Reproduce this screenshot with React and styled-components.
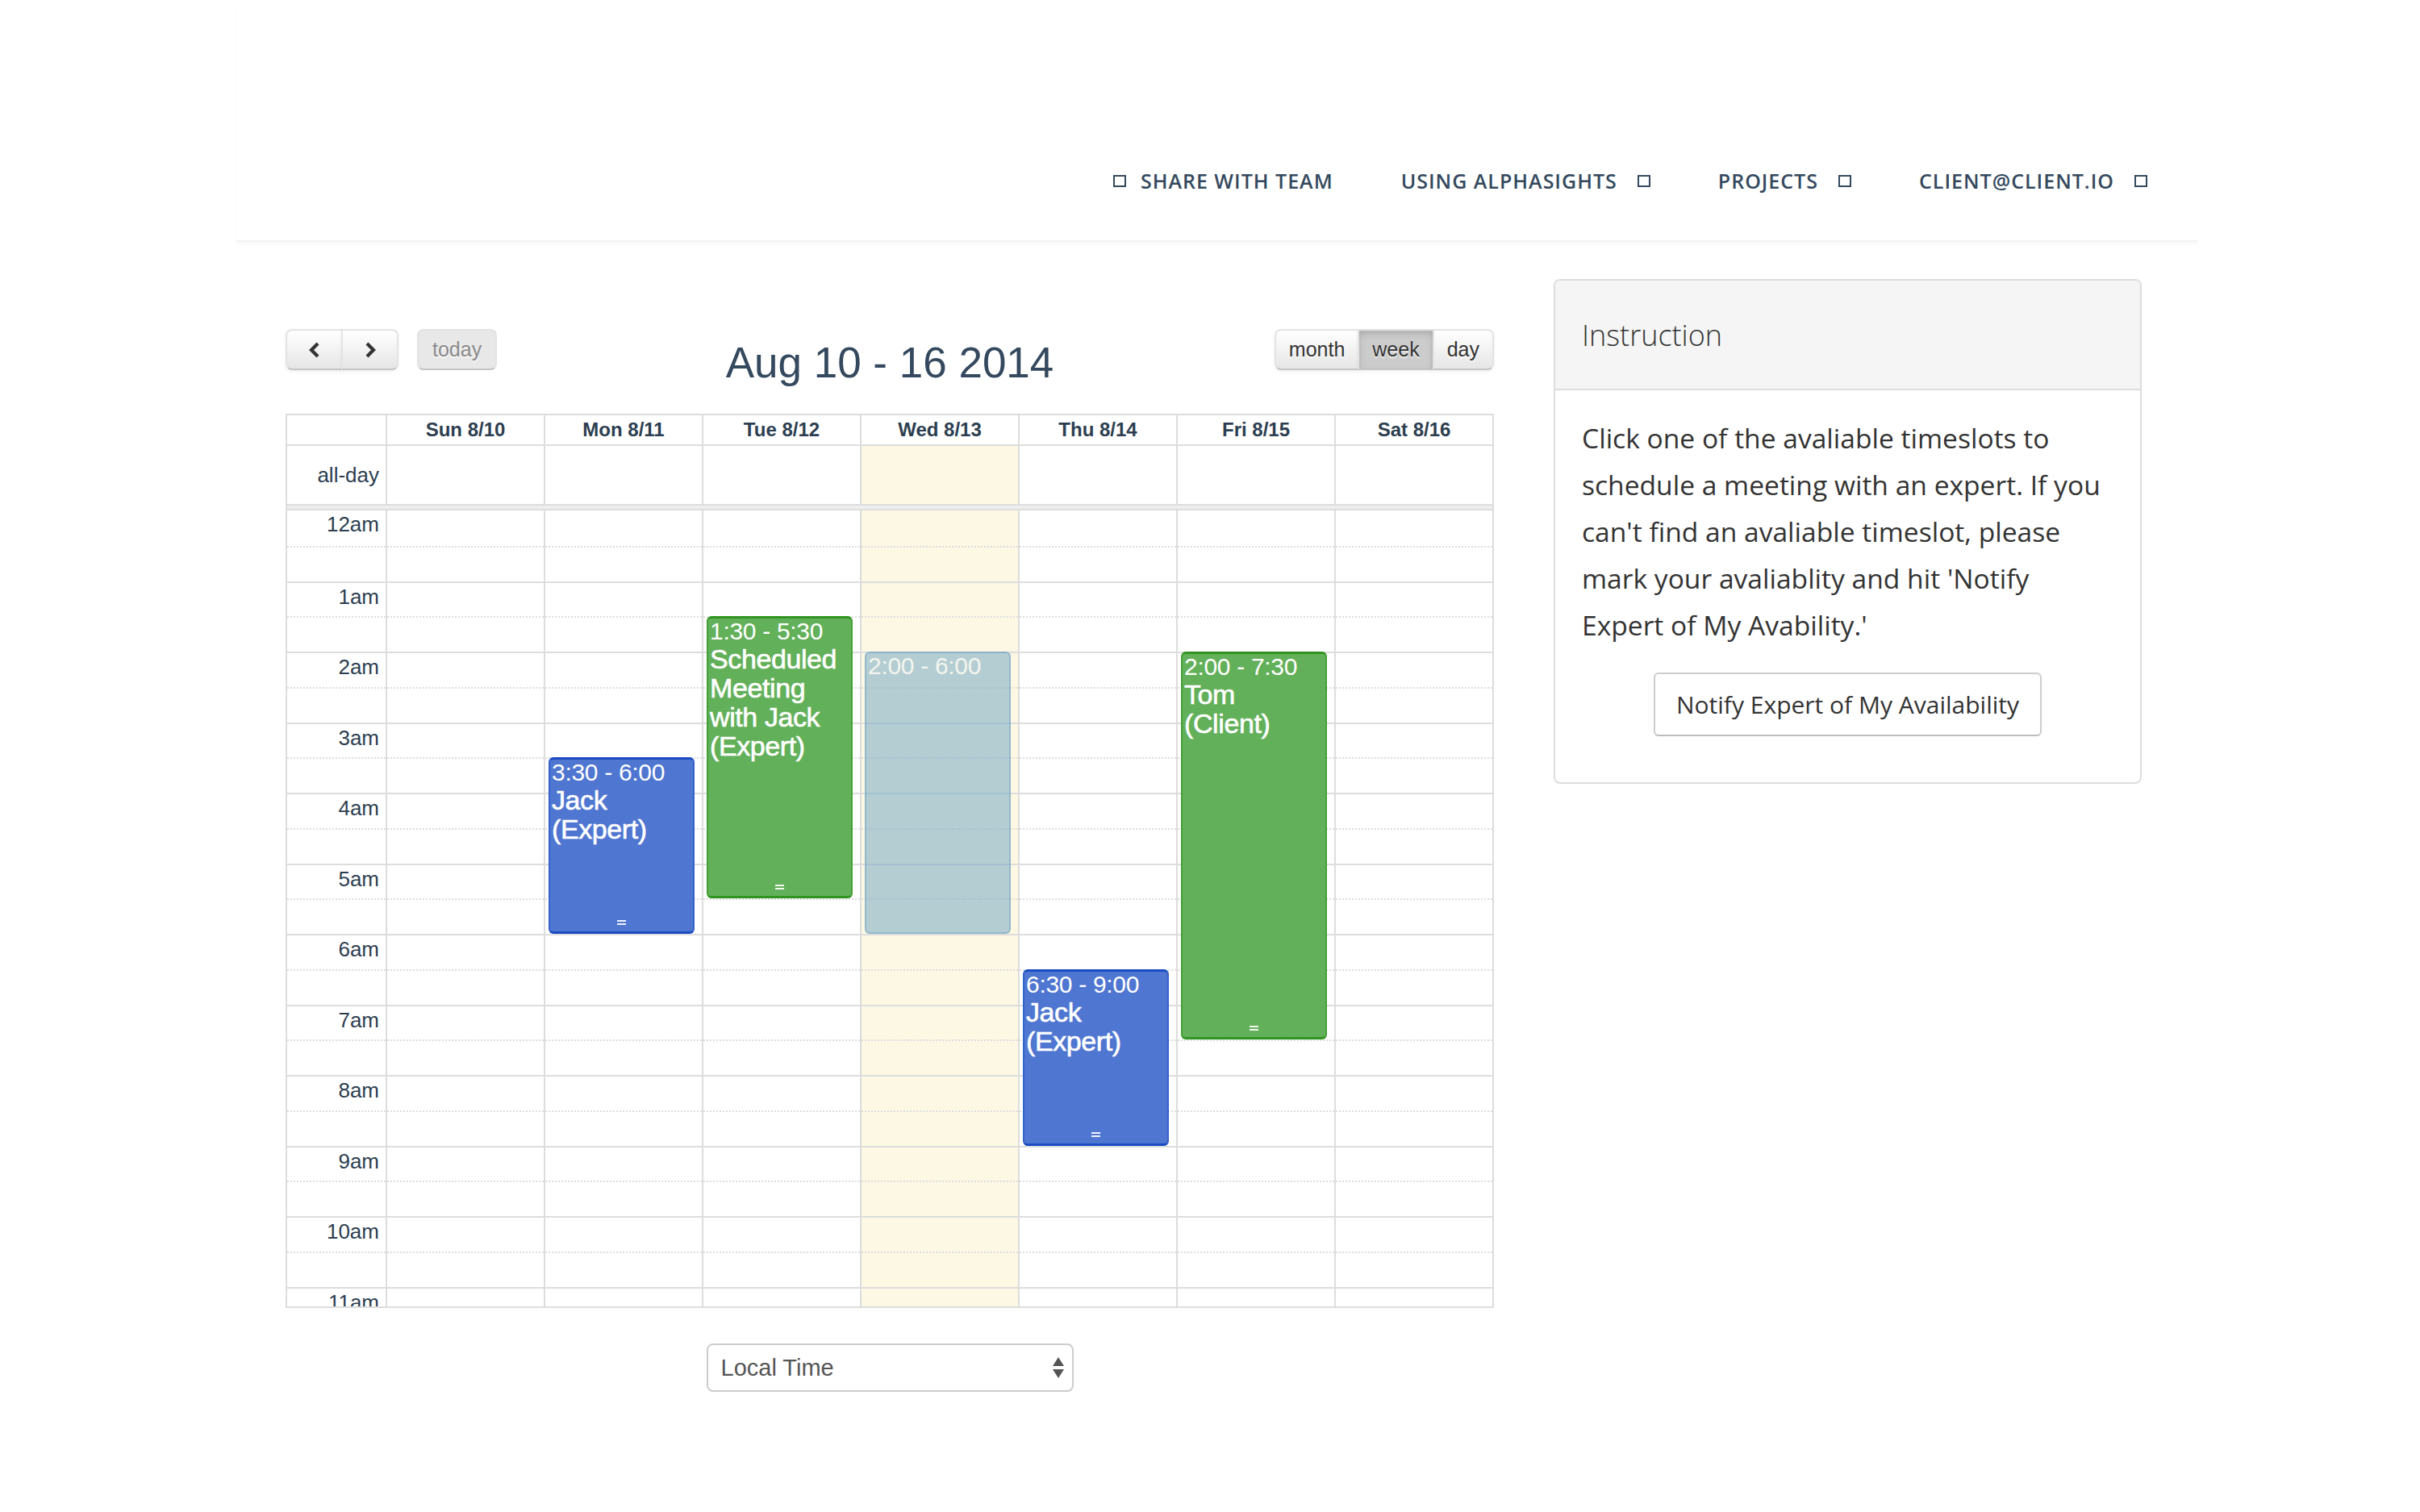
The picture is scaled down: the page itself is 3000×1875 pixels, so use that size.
import React from 'react'
import styled, { createGlobalStyle, css } from 'styled-components'

const HOUR = 87.5

const DAYS = ['Sun 8/10', 'Mon 8/11', 'Tue 8/12', 'Wed 8/13', 'Thu 8/14', 'Fri 8/15', 'Sat 8/16']
const TODAY = 3

const EVENTS = [
    { day: 1, start: 3.5, end: 6, time: '3:30 - 6:00', title: 'Jack (Expert)', kind: 'blue' },
    { day: 2, start: 1.5, end: 5.5, time: '1:30 - 5:30', title: 'Scheduled Meeting with Jack (Expert)', kind: 'green' },
    { day: 3, start: 2, end: 6, time: '2:00 - 6:00', title: '', kind: 'avail' },
    { day: 4, start: 6.5, end: 9, time: '6:30 - 9:00', title: 'Jack (Expert)', kind: 'blue' },
    { day: 5, start: 2, end: 7.5, time: '2:00 - 7:30', title: 'Tom (Client)', kind: 'green' },
]

const hourLabel = (h) => {
    const n = h % 12 === 0 ? 12 : h % 12
    return n + (h < 12 ? 'am' : 'pm')
}

const slots = Array.from({ length: 24 }, (_, i) => i)

function NavBox({ side }) {
    return <Box $side={side} />
}

function Chevron({ dir }) {
    const pts = dir === 'left' ? '12,2 4,10 12,18' : '4,2 12,10 4,18'
    return (
        <svg width="16" height="20" viewBox="0 0 16 20">
            <polyline points={pts} fill="none" stroke="#333" strokeWidth="4.2" strokeLinejoin="miter" />
        </svg>
    )
}

function App() {
    return (
        <Page>
            <GlobalStyle />
            <Header>
                <NavItem><NavBox side="left" />SHARE WITH TEAM</NavItem>
                <NavItem>USING ALPHASIGHTS<NavBox side="right" /></NavItem>
                <NavItem>PROJECTS<NavBox side="right" /></NavItem>
                <NavItem>CLIENT@CLIENT.IO<NavBox side="right" /></NavItem>
            </Header>

            <Main>
                <Calendar>
                    <Toolbar>
                        <ToolLeft>
                            <ButtonGroup>
                                <CalButton $first><Chevron dir="left" /></CalButton>
                                <CalButton $last><Chevron dir="right" /></CalButton>
                            </ButtonGroup>
                            <CalButton $first $last $disabled>today</CalButton>
                        </ToolLeft>
                        <Title>Aug 10 - 16 2014</Title>
                        <ToolRight>
                            <ButtonGroup>
                                <CalButton $first>month</CalButton>
                                <CalButton $active>week</CalButton>
                                <CalButton $last>day</CalButton>
                            </ButtonGroup>
                        </ToolRight>
                    </Toolbar>

                    <Table>
                        <Row>
                            <AxisHead />
                            {DAYS.map(d => <DayHead key={d}>{d}</DayHead>)}
                        </Row>
                        <AllDayRow>
                            <AllDayLabel>all-day</AllDayLabel>
                            {DAYS.map((d, i) => <AllDayCell key={d} $today={i === TODAY} />)}
                        </AllDayRow>
                        <Divider />
                        <TimeBody>
                            <AxisCol>
                                {slots.map(i => (
                                    <Slot key={i} $hour={i % 2 === 0} $first={i === 0}>
                                        {i % 2 === 0 && <AxisLabel>{hourLabel(i / 2)}</AxisLabel>}
                                    </Slot>
                                ))}
                            </AxisCol>
                            {DAYS.map((d, di) => (
                                <DayCol key={d} $today={di === TODAY}>
                                    {slots.map(i => <Slot key={i} $hour={i % 2 === 0} $first={i === 0} />)}
                                    {EVENTS.filter(e => e.day === di).map(e => (
                                        <Event
                                            key={e.time}
                                            $kind={e.kind}
                                            style={{ top: e.start * HOUR, height: (e.end - e.start) * HOUR }}
                                        >
                                            <EventTime>{e.time}</EventTime>
                                            {e.title && <EventTitle>{e.title}</EventTitle>}
                                            {e.kind !== 'avail' && <Handle />}
                                        </Event>
                                    ))}
                                </DayCol>
                            ))}
                        </TimeBody>
                    </Table>

                    <SelectWrap>
                        <Select defaultValue="local">
                            <option value="local">Local Time</option>
                            <option value="expert">Expert Time</option>
                        </Select>
                        <SelectArrows width="14" height="26" viewBox="0 0 14 26">
                            <path d="M0 11 L7 0 L14 11 Z" fill="#555" />
                            <path d="M0 15 L14 15 L7 26 Z" fill="#555" />
                        </SelectArrows>
                    </SelectWrap>
                </Calendar>

                <Panel>
                    <PanelHeading>Instruction</PanelHeading>
                    <PanelBody>
                        <PanelText>
                            Click one of the avaliable timeslots to schedule a meeting with an expert. If you
                            can't find an avaliable timeslot, please mark your avaliablity and hit 'Notify
                            Expert of My Avability.'
                        </PanelText>
                        <NotifyButton>Notify Expert of My Availability</NotifyButton>
                    </PanelBody>
                </Panel>
            </Main>
        </Page>
    )
}

export default App

const GlobalStyle = createGlobalStyle`
html, body {
    margin: 0;
    padding: 0;
    background: #fff;
}
body {
    font-family: "Open Sans", "Liberation Sans", sans-serif;
    color: #333;
}
*, *::before, *::after {
    box-sizing: border-box;
}
`

const Page = styled.div`
width: 3000px;
min-height: 1875px;
background: #fff;
`

/* ---------- header ---------- */

const Header = styled.header`
width: 2431px;
height: 300px;
margin-left: 293px;
padding: 200px 62px 0 0;
display: flex;
justify-content: flex-end;
align-items: flex-start;
gap: 84px;
border-bottom: 2px solid #f2f2f2;
box-shadow: 0 3px 4px rgba(0, 0, 0, 0.02);
`

const NavItem = styled.div`
display: flex;
align-items: center;
height: 48px;
font-family: "Open Sans", sans-serif;
font-weight: 600;
font-size: 25px;
letter-spacing: 1px;
color: #34495e;
white-space: nowrap;
`

const Box = styled.span`
display: inline-block;
width: 16px;
height: 15px;
border: 2px solid #34495e;
margin-right: ${p => p.$side === 'left' ? '18px' : '0'};
margin-left: ${p => p.$side === 'right' ? '25px' : '0'};
`

/* ---------- main ---------- */

const Main = styled.main`
display: flex;
align-items: flex-start;
gap: 74px;
margin: 46px 0 0 354px;
`

const Calendar = styled.section`
width: 1498px;
padding-top: 62px;
font-family: "Liberation Sans", Helvetica, Arial, sans-serif;
color: #2c3e50;
`

const Toolbar = styled.div`
display: grid;
grid-template-columns: 1fr auto 1fr;
align-items: start;
height: 72px;
margin-bottom: 33px;
`

const ToolLeft = styled.div`
display: flex;
gap: 23px;
`

const ToolRight = styled.div`
display: flex;
justify-content: flex-end;
`

const Title = styled.h2`
margin: 12px 0 0;
font-size: 53px;
line-height: 60px;
font-weight: 400;
color: #34495e;
`

const ButtonGroup = styled.div`
display: flex;
`

const CalButton = styled.button`
height: 51px;
min-width: 71px;
padding: 0 16px;
display: flex;
align-items: center;
justify-content: center;
font-family: "Liberation Sans", Helvetica, Arial, sans-serif;
font-size: 25px;
color: #333;
text-shadow: 0 2px 2px rgba(255, 255, 255, 0.75);
border: 2px solid;
border-color: #e3e3e3 #e3e3e3 #c4c4c4;
background: linear-gradient(to bottom, #ffffff, #e6e6e6);
box-shadow: inset 0 2px 0 rgba(255, 255, 255, 0.2), 0 2px 4px rgba(0, 0, 0, 0.06);
border-radius: ${p => `${p.$first ? 8 : 0}px ${p.$last ? 8 : 0}px ${p.$last ? 8 : 0}px ${p.$first ? 8 : 0}px`};
margin-left: ${p => p.$first ? '0' : '-2px'};

${p => p.$active && css`
    background: #cccccc;
    box-shadow: inset 0 4px 8px rgba(0, 0, 0, 0.15), 0 2px 4px rgba(0, 0, 0, 0.05);
`}

${p => p.$disabled && css`
    background: #e8e8e8;
    color: #8a8a8a;
    box-shadow: none;
    padding: 0 17px;
`}
`

/* ---------- grid ---------- */

const Table = styled.div`
border: 2px solid #ddd;
width: 1498px;
`

const Row = styled.div`
display: grid;
grid-template-columns: 122px repeat(7, 196px);
border-bottom: 2px solid #ddd;
`

const AxisHead = styled.div`
height: 36px;
`

const DayHead = styled.div`
height: 36px;
border-left: 2px solid #ddd;
text-align: center;
font-weight: 700;
font-size: 24px;
line-height: 36px;
color: #2c3e50;
`

const AllDayRow = styled.div`
display: grid;
grid-template-columns: 122px repeat(7, 196px);
height: 72px;
`

const AllDayLabel = styled.div`
display: flex;
align-items: center;
justify-content: flex-end;
padding-right: 8px;
font-size: 26px;
color: #2c3e50;
`

const AllDayCell = styled.div`
border-left: 2px solid #ddd;
background: ${p => p.$today ? '#fcf8e3' : '#fff'};
`

const Divider = styled.div`
height: 8px;
background: #eee;
border-top: 2px solid #ddd;
border-bottom: 2px solid #ddd;
`

const TimeBody = styled.div`
display: grid;
grid-template-columns: 122px repeat(7, 196px);
height: 987px;
overflow: hidden;
`

const AxisCol = styled.div`
display: flex;
flex-direction: column;
`

const DayCol = styled.div`
position: relative;
display: flex;
flex-direction: column;
border-left: 2px solid #ddd;
background: ${p => p.$today ? '#fcf8e3' : '#fff'};
`

const Slot = styled.div`
flex: 0 0 43.75px;
height: 43.75px;
border-top: ${p => p.$first ? 'none' : p.$hour ? '2px solid #ddd' : '2px dotted #ddd'};
`

const AxisLabel = styled.div`
text-align: right;
padding-right: 8px;
font-size: 26px;
line-height: 34px;
color: #2c3e50;
`

const eventColors = {
    blue: css`
        background: #4f76d0;
        border: 2px solid #3461ca;
        border-top: 3px solid #1a4bc3;
        border-bottom: 3px solid #1a4bc3;
        color: #fff;
    `,
    green: css`
        background: #63b05a;
        border: 2px solid #44a035;
        border-top: 3px solid #2f9421;
        border-bottom: 3px solid #2f9421;
        color: #fff;
    `,
    avail: css`
        background: rgba(119, 170, 198, 0.55);
        border: 2px solid rgba(110, 160, 190, 0.45);
        color: #f3f5ee;
    `,
}

const Event = styled.div`
position: absolute;
left: 4px;
right: 9px;
display: flex;
flex-direction: column;
overflow: hidden;
padding: 0 2px;
border-radius: 6px;
${p => eventColors[p.$kind]}
`

const EventTime = styled.div`
font-size: 30px;
line-height: 32px;
letter-spacing: -0.3px;
white-space: nowrap;
`

const EventTitle = styled.div`
font-size: 34px;
line-height: 36px;
letter-spacing: -0.4px;
-webkit-text-stroke: 0.6px currentColor;
`

const Handle = styled.div`
margin-top: auto;
margin-bottom: 8px;
align-self: center;
width: 11px;
height: 6px;
border-top: 2px solid rgba(255, 255, 255, 0.9);
border-bottom: 2px solid rgba(255, 255, 255, 0.9);
`

/* ---------- footer select ---------- */

const SelectWrap = styled.div`
position: relative;
width: 455px;
margin: 44px auto 0;
`

const Select = styled.select`
appearance: none;
-webkit-appearance: none;
width: 455px;
height: 60px;
padding: 0 40px 0 16px;
border: 2px solid #ccc;
border-radius: 8px;
background: #fff;
font-family: "Liberation Sans", Helvetica, Arial, sans-serif;
font-size: 29px;
color: #555;
outline: none;
`

const SelectArrows = styled.svg`
position: absolute;
right: 12px;
top: 17px;
pointer-events: none;
`

/* ---------- instruction panel ---------- */

const Panel = styled.aside`
width: 729px;
border: 2px solid #ddd;
border-radius: 8px;
overflow: hidden;
background: #fff;
`

const PanelHeading = styled.div`
height: 136px;
display: flex;
align-items: center;
padding-left: 33px;
background: #f5f5f5;
border-bottom: 2px solid #ddd;
font-family: "Open Sans", sans-serif;
font-weight: 300;
font-size: 36px;
color: #333;
`

const PanelBody = styled.div`
padding: 30px 33px 57px;
display: flex;
flex-direction: column;
`

const PanelText = styled.p`
margin: 0;
font-family: "Open Sans", sans-serif;
font-size: 33.6px;
line-height: 58px;
color: #333;
`

const NotifyButton = styled.button`
align-self: center;
margin-top: 30px;
height: 79px;
padding: 0 26px;
background: #fff;
border: 2px solid #ccc;
border-bottom-color: #bdbdbd;
border-radius: 6px;
font-family: "Open Sans", sans-serif;
font-size: 30px;
color: #333;
`
